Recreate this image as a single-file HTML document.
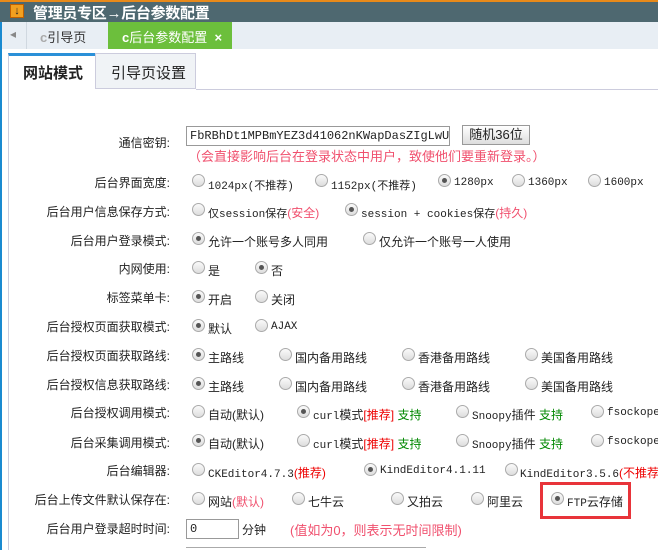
<!DOCTYPE html><html><head><meta charset="utf-8"><style>
body{margin:0;width:658px;height:550px;overflow:hidden;background:#fff;font-family:"Liberation Sans","Noto Sans CJK SC",sans-serif;font-size:12px;color:#222;position:relative}
.a{position:absolute;white-space:nowrap}
.l{position:absolute;right:488px;white-space:nowrap}
.r{position:absolute;width:11px;height:11px;border-radius:50%;border:1px solid #aaa;background:linear-gradient(#fafafa,#ddd)}
.r.c::after{content:"";position:absolute;left:3px;top:3px;width:5px;height:5px;border-radius:50%;background:#555}
.m{font-family:"Liberation Mono","Noto Sans CJK SC",monospace;font-size:11px}
.red{color:#f0506e}.rr{color:#e00}.g{color:#080}
</style></head><body>
<div class="a" style="left:0;top:0;width:658px;height:22px;background:#4e6870;border-top:2px solid #e88a1a;box-sizing:border-box"></div>
<div class="a" style="left:10px;top:4px;width:14px;height:14px;background:#f2a020;border:1px solid #c06000;box-sizing:border-box;font-size:11px;line-height:12px;text-align:center;font-weight:bold">↓</div>
<div class="a" style="left:33px;top:2px;color:#fff;font-weight:bold;font-size:15px;letter-spacing:-0.3px">管理员专区→后台参数配置</div>
<div class="a" style="left:0;top:22px;width:658px;height:27px;background:#e8eef4"></div>
<div class="a" style="left:0;top:22px;width:2px;height:528px;background:#1a8ad0"></div>
<div class="a" style="left:10px;top:27px;color:#888">◂</div>
<div class="a" style="left:26px;top:22px;width:1px;height:27px;background:#d0d8e0"></div>
<div class="a" style="left:40px;top:27px;color:#333;font-size:13px"><span style="color:#aaa;font-weight:bold">c</span>引导页</div>
<div class="a" style="left:108px;top:22px;width:124px;height:27px;background:#6cbf3c"></div>
<div class="a" style="left:122px;top:27px;color:#fff;font-size:13px"><b>c</b>后台参数配置 &nbsp;<b>×</b></div>
<div class="a" style="left:8px;top:53px;width:87px;height:36px;border-top:3px solid #2a90d8;box-sizing:border-box;border-left:1px solid #ccd;background:#fff"></div>
<div class="a" style="left:23px;top:62px;font-size:15px;font-weight:bold">网站模式</div>
<div class="a" style="left:95px;top:53px;width:101px;height:36px;border:1px solid #ccd;box-sizing:border-box;background:#f0f3f6"></div>
<div class="a" style="left:111px;top:62px;font-size:15px">引导页设置</div>
<div class="a" style="left:196px;top:89px;width:462px;height:1px;background:#ccd"></div>
<div class="a" style="left:8px;top:89px;width:1px;height:461px;background:#ccd"></div>

<div class="l" style="top:134px">通信密钥:</div>
<div class="a m" style="left:186px;top:126px;width:264px;height:20px;border:1px solid #999;box-sizing:border-box;padding:2px 3px;font-size:12px">FbRBhDt1MPBmYEZ3d41062nKWapDasZIgLwU</div>
<div class="a" style="left:462px;top:125px;width:68px;height:20px;border:1px solid #999;box-sizing:border-box;background:linear-gradient(#fff,#ddd);text-align:center;line-height:18px;font-size:13px">随机36位</div>
<div class="a red" style="left:188px;top:146px;font-size:13px">（会直接影响后台在登录状态中用户，致使他们要重新登录。）</div>

<div class="l" style="top:174px">后台界面宽度:</div>
<div class="r" style="left:192px;top:174px"></div><div class="a m" style="left:208px;top:177px">1024px(不推荐)</div>
<div class="r" style="left:315px;top:174px"></div><div class="a m" style="left:331px;top:177px">1152px(不推荐)</div>
<div class="r c" style="left:438px;top:174px"></div><div class="a m" style="left:454px;top:177px">1280px</div>
<div class="r" style="left:512px;top:174px"></div><div class="a m" style="left:528px;top:177px">1360px</div>
<div class="r" style="left:588px;top:174px"></div><div class="a m" style="left:604px;top:177px">1600px</div>

<div class="l" style="top:203px">后台用户信息保存方式:</div>
<div class="r" style="left:192px;top:203px"></div><div class="a" style="left:208px;top:204px"><span class="m">仅session保存</span><span class="red">(安全)</span></div>
<div class="r c" style="left:345px;top:203px"></div><div class="a" style="left:361px;top:204px"><span class="m">session + cookies保存</span><span class="red">(持久)</span></div>

<div class="l" style="top:232px">后台用户登录模式:</div>
<div class="r c" style="left:192px;top:232px"></div><div class="a" style="left:208px;top:233px">允许一个账号多人同用</div>
<div class="r" style="left:363px;top:232px"></div><div class="a" style="left:379px;top:233px">仅允许一个账号一人使用</div>

<div class="l" style="top:260px">内网使用:</div>
<div class="r" style="left:192px;top:261px"></div><div class="a" style="left:208px;top:262px">是</div>
<div class="r c" style="left:255px;top:261px"></div><div class="a" style="left:271px;top:262px">否</div>

<div class="l" style="top:289px">标签菜单卡:</div>
<div class="r c" style="left:192px;top:290px"></div><div class="a" style="left:208px;top:291px">开启</div>
<div class="r" style="left:255px;top:290px"></div><div class="a" style="left:271px;top:291px">关闭</div>

<div class="l" style="top:318px">后台授权页面获取模式:</div>
<div class="r c" style="left:192px;top:319px"></div><div class="a" style="left:208px;top:320px">默认</div>
<div class="r" style="left:255px;top:319px"></div><div class="a m" style="left:271px;top:321px">AJAX</div>

<div class="l" style="top:347px">后台授权页面获取路线:</div>
<div class="r c" style="left:192px;top:348px"></div><div class="a" style="left:208px;top:349px">主路线</div>
<div class="r" style="left:279px;top:348px"></div><div class="a" style="left:295px;top:349px">国内备用路线</div>
<div class="r" style="left:402px;top:348px"></div><div class="a" style="left:418px;top:349px">香港备用路线</div>
<div class="r" style="left:525px;top:348px"></div><div class="a" style="left:541px;top:349px">美国备用路线</div>

<div class="l" style="top:376px">后台授权信息获取路线:</div>
<div class="r c" style="left:192px;top:377px"></div><div class="a" style="left:208px;top:378px">主路线</div>
<div class="r" style="left:279px;top:377px"></div><div class="a" style="left:295px;top:378px">国内备用路线</div>
<div class="r" style="left:402px;top:377px"></div><div class="a" style="left:418px;top:378px">香港备用路线</div>
<div class="r" style="left:525px;top:377px"></div><div class="a" style="left:541px;top:378px">美国备用路线</div>

<div class="l" style="top:404px">后台授权调用模式:</div>
<div class="r" style="left:192px;top:405px"></div><div class="a" style="left:208px;top:406px">自动(默认)</div>
<div class="r c" style="left:297px;top:405px"></div><div class="a" style="left:313px;top:406px"><span class="m">curl</span>模式<span class="rr">[推荐]</span> <span class="g">支持</span></div>
<div class="r" style="left:456px;top:405px"></div><div class="a" style="left:472px;top:406px"><span class="m">Snoopy</span>插件 <span class="g">支持</span></div>
<div class="r" style="left:591px;top:405px"></div><div class="a m" style="left:607px;top:407px">fsockopen</div>

<div class="l" style="top:434px">后台采集调用模式:</div>
<div class="r c" style="left:192px;top:434px"></div><div class="a" style="left:208px;top:435px">自动(默认)</div>
<div class="r" style="left:297px;top:434px"></div><div class="a" style="left:313px;top:435px"><span class="m">curl</span>模式<span class="rr">[推荐]</span> <span class="g">支持</span></div>
<div class="r" style="left:456px;top:434px"></div><div class="a" style="left:472px;top:435px"><span class="m">Snoopy</span>插件 <span class="g">支持</span></div>
<div class="r" style="left:591px;top:434px"></div><div class="a m" style="left:607px;top:436px">fsockopen</div>

<div class="l" style="top:462px">后台编辑器:</div>
<div class="r" style="left:192px;top:463px"></div><div class="a" style="left:208px;top:464px"><span class="m">CKEditor4.7.3</span><span class="rr">(推荐)</span></div>
<div class="r c" style="left:364px;top:463px"></div><div class="a m" style="left:380px;top:465px">KindEditor4.1.11</div>
<div class="r" style="left:505px;top:463px"></div><div class="a" style="left:520px;top:464px"><span class="m">KindEditor3.5.6</span><span class="rr">(不推荐)</span></div>

<div class="l" style="top:491px">后台上传文件默认保存在:</div>
<div class="r" style="left:192px;top:492px"></div><div class="a" style="left:208px;top:493px">网站<span class="red">(默认)</span></div>
<div class="r" style="left:292px;top:492px"></div><div class="a" style="left:308px;top:493px">七牛云</div>
<div class="r" style="left:391px;top:492px"></div><div class="a" style="left:407px;top:493px">又拍云</div>
<div class="r" style="left:471px;top:492px"></div><div class="a" style="left:487px;top:493px">阿里云</div>
<div class="a" style="left:540px;top:482px;width:91px;height:37px;border:3px solid #e8343a;box-sizing:border-box"></div>
<div class="r c" style="left:551px;top:492px"></div><div class="a" style="left:567px;top:493px"><span class="m">FTP</span>云存储</div>

<div class="l" style="top:520px">后台用户登录超时时间:</div>
<div class="a m" style="left:186px;top:519px;width:53px;height:20px;border:1px solid #999;box-sizing:border-box;padding:2px 3px;font-size:12px">0</div>
<div class="a" style="left:242px;top:521px">分钟</div>
<div class="a red" style="left:290px;top:520px;font-size:13px">(值如为0，则表示无时间限制)</div>
<div class="a" style="left:186px;top:547px;width:240px;height:1px;background:#aaa"></div>
</body></html>
